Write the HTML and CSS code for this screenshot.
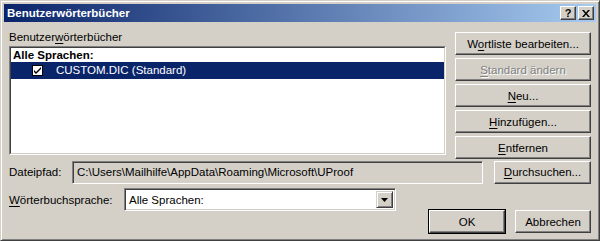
FILE: index.html
```html
<!DOCTYPE html>
<html lang="de">
<head>
	<meta charset="UTF-8">
	<title>Benutzerwörterbücher</title>
	<link rel="stylesheet" href="styles.css">
</head>
<body>
	<div class="window">
		<div class="titlebar">
			<span class="title">Benutzerwörterbücher</span>
			<div class="tb-buttons">
				<span class="tb-btn">?</span>
				<span class="tb-btn">
					<svg width="8" height="7" viewBox="0 0 8 7"><path d="M0 0h2l2 2.5 2-2.5h2l-3 3.5 3 3.5h-2l-2-2.5-2 2.5h-2l3-3.5z" fill="#000"/></svg>
				</span>
			</div>
		</div>
		<div class="content">
			<div class="top">
				<div class="dicts">
					<div class="label">Benutzer<u>w</u>örterbücher</div>
					<div class="listbox">
						<div class="list-inner">
							<div class="group">Alle Sprachen:</div>
							<div class="item selected">
								<span class="check">
									<svg width="9" height="9" viewBox="0 0 9 9"><path d="M1 4l2 2 5-5v2l-5 5-2-2z" fill="#000"/></svg>
								</span>
								CUSTOM.DIC (Standard)
							</div>
						</div>
					</div>
				</div>
				<div class="side-buttons">
					<button class="btn">W<u>o</u>rtliste bearbeiten...</button>
					<button class="btn disabled"><u>S</u>tandard ändern</button>
					<button class="btn"><u>N</u>eu...</button>
					<button class="btn"><u>H</u>inzufügen...</button>
					<button class="btn"><u>E</u>ntfernen</button>
				</div>
			</div>
			<div class="path-row">
				<span class="row-label">Dateipfad:</span>
				<div class="field readonly">C:\Users\Mailhilfe\AppData\Roaming\Microsoft\UProof</div>
				<button class="btn browse"><u>D</u>urchsuchen...</button>
			</div>
			<div class="lang-row">
				<span class="row-label"><u>W</u>örterbuchsprache:</span>
				<div class="combo">
					<span class="combo-text">Alle Sprachen:</span>
					<span class="combo-arrow">
						<svg width="7" height="4" viewBox="0 0 7 4"><path d="M0 0h7l-3.5 4z" fill="#000"/></svg>
					</span>
				</div>
			</div>
			<div class="footer">
				<button class="btn default">OK</button>
				<button class="btn">Abbrechen</button>
			</div>
		</div>
	</div>
</body>
</html>
```

FILE: styles.css
```css
html,body{margin:0;padding:0;}
body{background:#d4d0c8;font-family:"Liberation Sans",Arial,sans-serif;font-size:11.5px;color:#000;}
u{text-decoration:underline;text-underline-offset:2px;}

.window{
	width:600px;
	height:241px;
	box-sizing:border-box;
	background:#d4d0c8;
	border-top:1px solid #d4d0c8;
	border-left:1px solid #d4d0c8;
	border-right:1px solid #404040;
	border-bottom:1px solid #404040;
	box-shadow:inset 1px 1px #fff,inset -1px -1px #808080;
	padding:3px;
	display:flex;
	flex-direction:column;
}

/* titelleiste */
.titlebar{
	height:18px;
	background:linear-gradient(to right,#0a246a,#a6caf0);
	display:flex;
	align-items:center;
	justify-content:space-between;
	padding:0 2px 0 3px;
}
.title{color:#fff;font-weight:bold;font-size:11.5px;}
.tb-buttons{display:flex;gap:2px;}
.tb-btn{
	width:14px;
	height:12px;
	background:#d4d0c8;
	border-top:1px solid #fff;
	border-left:1px solid #fff;
	border-right:1px solid #404040;
	border-bottom:1px solid #404040;
	box-shadow:inset -1px -1px #808080;
	font-weight:bold;
	font-size:11px;
	line-height:12px;
	text-align:center;
	display:flex;
	align-items:center;
	justify-content:center;
}

.content{padding:8px 5px 0 5px;flex:1;}

.top{display:flex;justify-content:space-between;}
.dicts{width:437px;}
.label{height:14px;line-height:14px;margin-bottom:2px;}

/* liste */
.listbox{
	height:109px;
	box-sizing:border-box;
	border-top:1px solid #808080;
	border-left:1px solid #808080;
	border-right:1px solid #fff;
	border-bottom:1px solid #fff;
}
.list-inner{
	height:100%;
	box-sizing:border-box;
	background:#fff;
	border-top:1px solid #404040;
	border-left:1px solid #404040;
	border-right:1px solid #d4d0c8;
	border-bottom:1px solid #d4d0c8;
}
.group{font-weight:bold;height:14px;line-height:14px;padding-left:2px;}
.item{height:17px;line-height:17px;display:flex;align-items:center;}
.selected{background:#0a246a;color:#fff;}
.check{
	width:11px;
	height:11px;
	background:#fff;
	border:1px solid #000;
	box-sizing:border-box;
	margin:0 13px 0 21px;
	display:flex;
	align-items:center;
	justify-content:center;
}

/* knoepfe */
.btn{
	font-family:inherit;
	font-size:11.5px;
	color:#000;
	background:#d4d0c8;
	height:23px;
	padding:0;
	border-top:1px solid #fff;
	border-left:1px solid #fff;
	border-right:1px solid #404040;
	border-bottom:1px solid #404040;
	box-shadow:inset -1px -1px #808080;
	cursor:pointer;
}
.side-buttons{display:flex;flex-direction:column;gap:3px;width:136px;margin-top:2px;}
.disabled{color:#808080;text-shadow:1px 1px #fff;}
.disabled u{text-decoration-color:#808080;}

.path-row{display:flex;align-items:center;margin-top:1px;height:24px;}
.row-label{display:inline-block;}
.path-row .row-label{width:63px;}
.field{
	width:405px;
	height:21px;
	line-height:21px;
	padding-left:4px;
	border-top:1px solid #808080;
	border-left:1px solid #808080;
	border-right:1px solid #fff;
	border-bottom:1px solid #fff;
	box-shadow:inset 1px 1px #404040,inset -1px -1px #d4d0c8;
	white-space:nowrap;
	overflow:hidden;
}
.readonly{background:#d4d0c8;}
.browse{width:97px;margin-left:auto;}

.lang-row{display:flex;align-items:center;margin-top:4px;height:23px;}
.lang-row .row-label{width:115px;}
.combo{
	width:272px;
	background:#fff;
	border-top:1px solid #808080;
	border-left:1px solid #808080;
	border-right:1px solid #fff;
	border-bottom:1px solid #fff;
	box-shadow:inset 1px 1px #404040,inset -1px -1px #d4d0c8;
	display:flex;
	align-items:center;
	justify-content:space-between;
	padding:2px;
	box-sizing:border-box;
	height:23px;
}
.combo-text{padding-left:2px;}
.combo-arrow{
	width:15px;
	height:15px;
	background:#d4d0c8;
	border-top:1px solid #d4d0c8;
	border-left:1px solid #d4d0c8;
	border-right:1px solid #404040;
	border-bottom:1px solid #404040;
	box-shadow:inset 1px 1px #fff,inset -1px -1px #808080;
	display:flex;
	align-items:center;
	justify-content:center;
}

.footer{display:flex;justify-content:flex-end;gap:10px;margin-top:-1px;}
.footer .btn{width:76px;}
.default{outline:1px solid #000;outline-offset:0;}
```
